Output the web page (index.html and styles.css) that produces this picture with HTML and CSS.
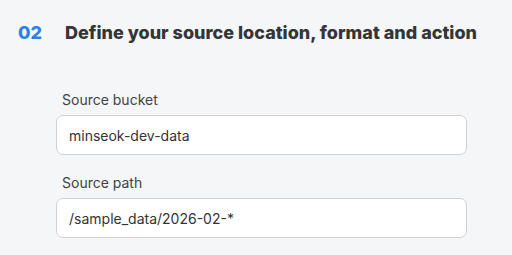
FILE: index.html
```html
<!DOCTYPE html>
<html>
<head>
<meta charset="utf-8">
<link rel="stylesheet" href="styles.css">
</head>
<body>
<section class="step">
  <header class="step-head">
    <span class="step-num">02</span>
    <h2 class="step-title">Define your source location, format and action</h2>
  </header>
  <div class="fields">
    <div class="field">
      <label class="field-label">Source bucket</label>
      <div class="field-input">minseok-dev-data</div>
    </div>
    <div class="field">
      <label class="field-label">Source path</label>
      <div class="field-input">/sample_data/2026-02-*</div>
    </div>
  </div>
</section>
</body>
</html>
```
FILE: styles.css
```css
html, body {
  margin: 0;
  padding: 0;
  background: #f5f6f8;
  font-family: Inter, "Noto Sans", sans-serif;
}
.step {
  padding: 21px 0 0 18px;
}
.step-head {
  display: flex;
  align-items: center;
  height: 22px;
}
.step-num {
  width: 47px;
  font-size: 18px;
  font-weight: 800;
  color: #2f7fe8;
}
.step-title {
  margin: 0;
  font-size: 18px;
  font-weight: 800;
  color: #343537;
}
.fields {
  margin: 48px 0 0 38px;
  width: 411px;
  display: flex;
  flex-direction: column;
  gap: 19px;
}
.field {
  display: flex;
  flex-direction: column;
  gap: 7px;
}
.field-label {
  padding-left: 6px;
  font-size: 14px;
  color: #414245;
  line-height: 17px;
}
.field-input {
  box-sizing: border-box;
  height: 40px;
  border: 1px solid #cfd0d3;
  border-radius: 7px;
  background: #fff;
  padding: 0 12px;
  display: flex;
  align-items: center;
  font-size: 14px;
  color: #333436;
}
```
